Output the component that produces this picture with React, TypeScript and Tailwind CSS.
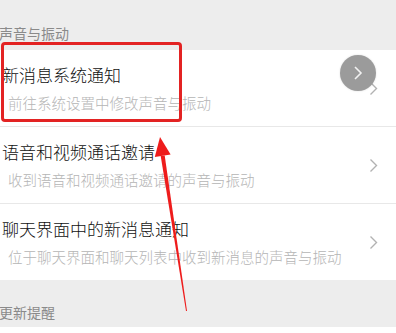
import React from "react";

const rows = [
  { title: "新消息系统通知", sub: "前往系统设置中修改声音与振动" },
  { title: "语音和视频通话邀请", sub: "收到语音和视频通话邀请的声音与振动" },
  { title: "聊天界面中的新消息通知", sub: "位于聊天界面和聊天列表中收到新消息的声音与振动" },
];

function Chevron({ className }: { className?: string }) {
  return (
    <svg width="9" height="15" viewBox="0 0 9 15" className={className}>
      <path d="M1.5 1.5 L7.5 7.5 L1.5 13.5" fill="none" stroke="#b2b2b2" strokeWidth="1.4" />
    </svg>
  );
}

export default function App() {
  return (
    <div
      className="relative w-[396px] h-[333px] overflow-hidden bg-[#ededed]"
      style={{ fontFamily: '"Noto Sans CJK SC", "Noto Sans", sans-serif' }}
    >
      <div className="h-[50px] flex items-end pb-[8px] text-[14px] leading-[18px] text-[#8a8a8a] -ml-[1px]">
        声音与振动
      </div>
      <div className="bg-white">
        {rows.map((r, i) => (
          <div key={i} className={i < 2 ? "border-b border-[#e8e8e8]" : ""}>
            <div className="h-[76px] flex items-center pr-[18px]">
              <div className="flex-1 min-w-0">
                <div className="text-[17px] leading-[24px] font-light text-[#111111] pl-[2px] whitespace-nowrap">{r.title}</div>
                <div className="mt-[6px] text-[14.5px] leading-[20px] font-light text-[#b5b5b5] pl-[8px] whitespace-nowrap">{r.sub}</div>
              </div>
              <Chevron className="shrink-0" />
            </div>
          </div>
        ))}
      </div>
      <div className="h-[47px] flex items-end pb-[6px] text-[14px] leading-[18px] text-[#8a8a8a] -ml-[1px]">
        更新提醒
      </div>
      <div className="bg-white h-[20px]" />

      {/* red highlight rectangle */}
      <div className="absolute left-[1px] top-[42px] w-[181px] h-[80px] border-[3px] border-[#e32323] rounded-[4px]" />

      {/* floating gray button */}
      <div className="absolute left-[340px] top-[55px] w-[36px] h-[36px] rounded-full bg-[#9b9b9b] flex items-center justify-center shadow-[0_0_2px_rgba(0,0,0,0.15)]">
        <svg width="12" height="16" viewBox="0 0 12 16">
          <path d="M3 2 L9 8 L3 14" fill="none" stroke="#f2f2f2" strokeWidth="1.6" />
        </svg>
      </div>

      {/* red arrow */}
      <svg className="absolute left-0 top-0" width="396" height="333" viewBox="0 0 396 333">
        <polygon points="186,311 187,311 164.7,155.5 160.7,156.1" fill="#ee1c1c" />
        <polygon points="160,137 170.6,154.6 154.8,157" fill="#ee1c1c" />
      </svg>
    </div>
  );
}
